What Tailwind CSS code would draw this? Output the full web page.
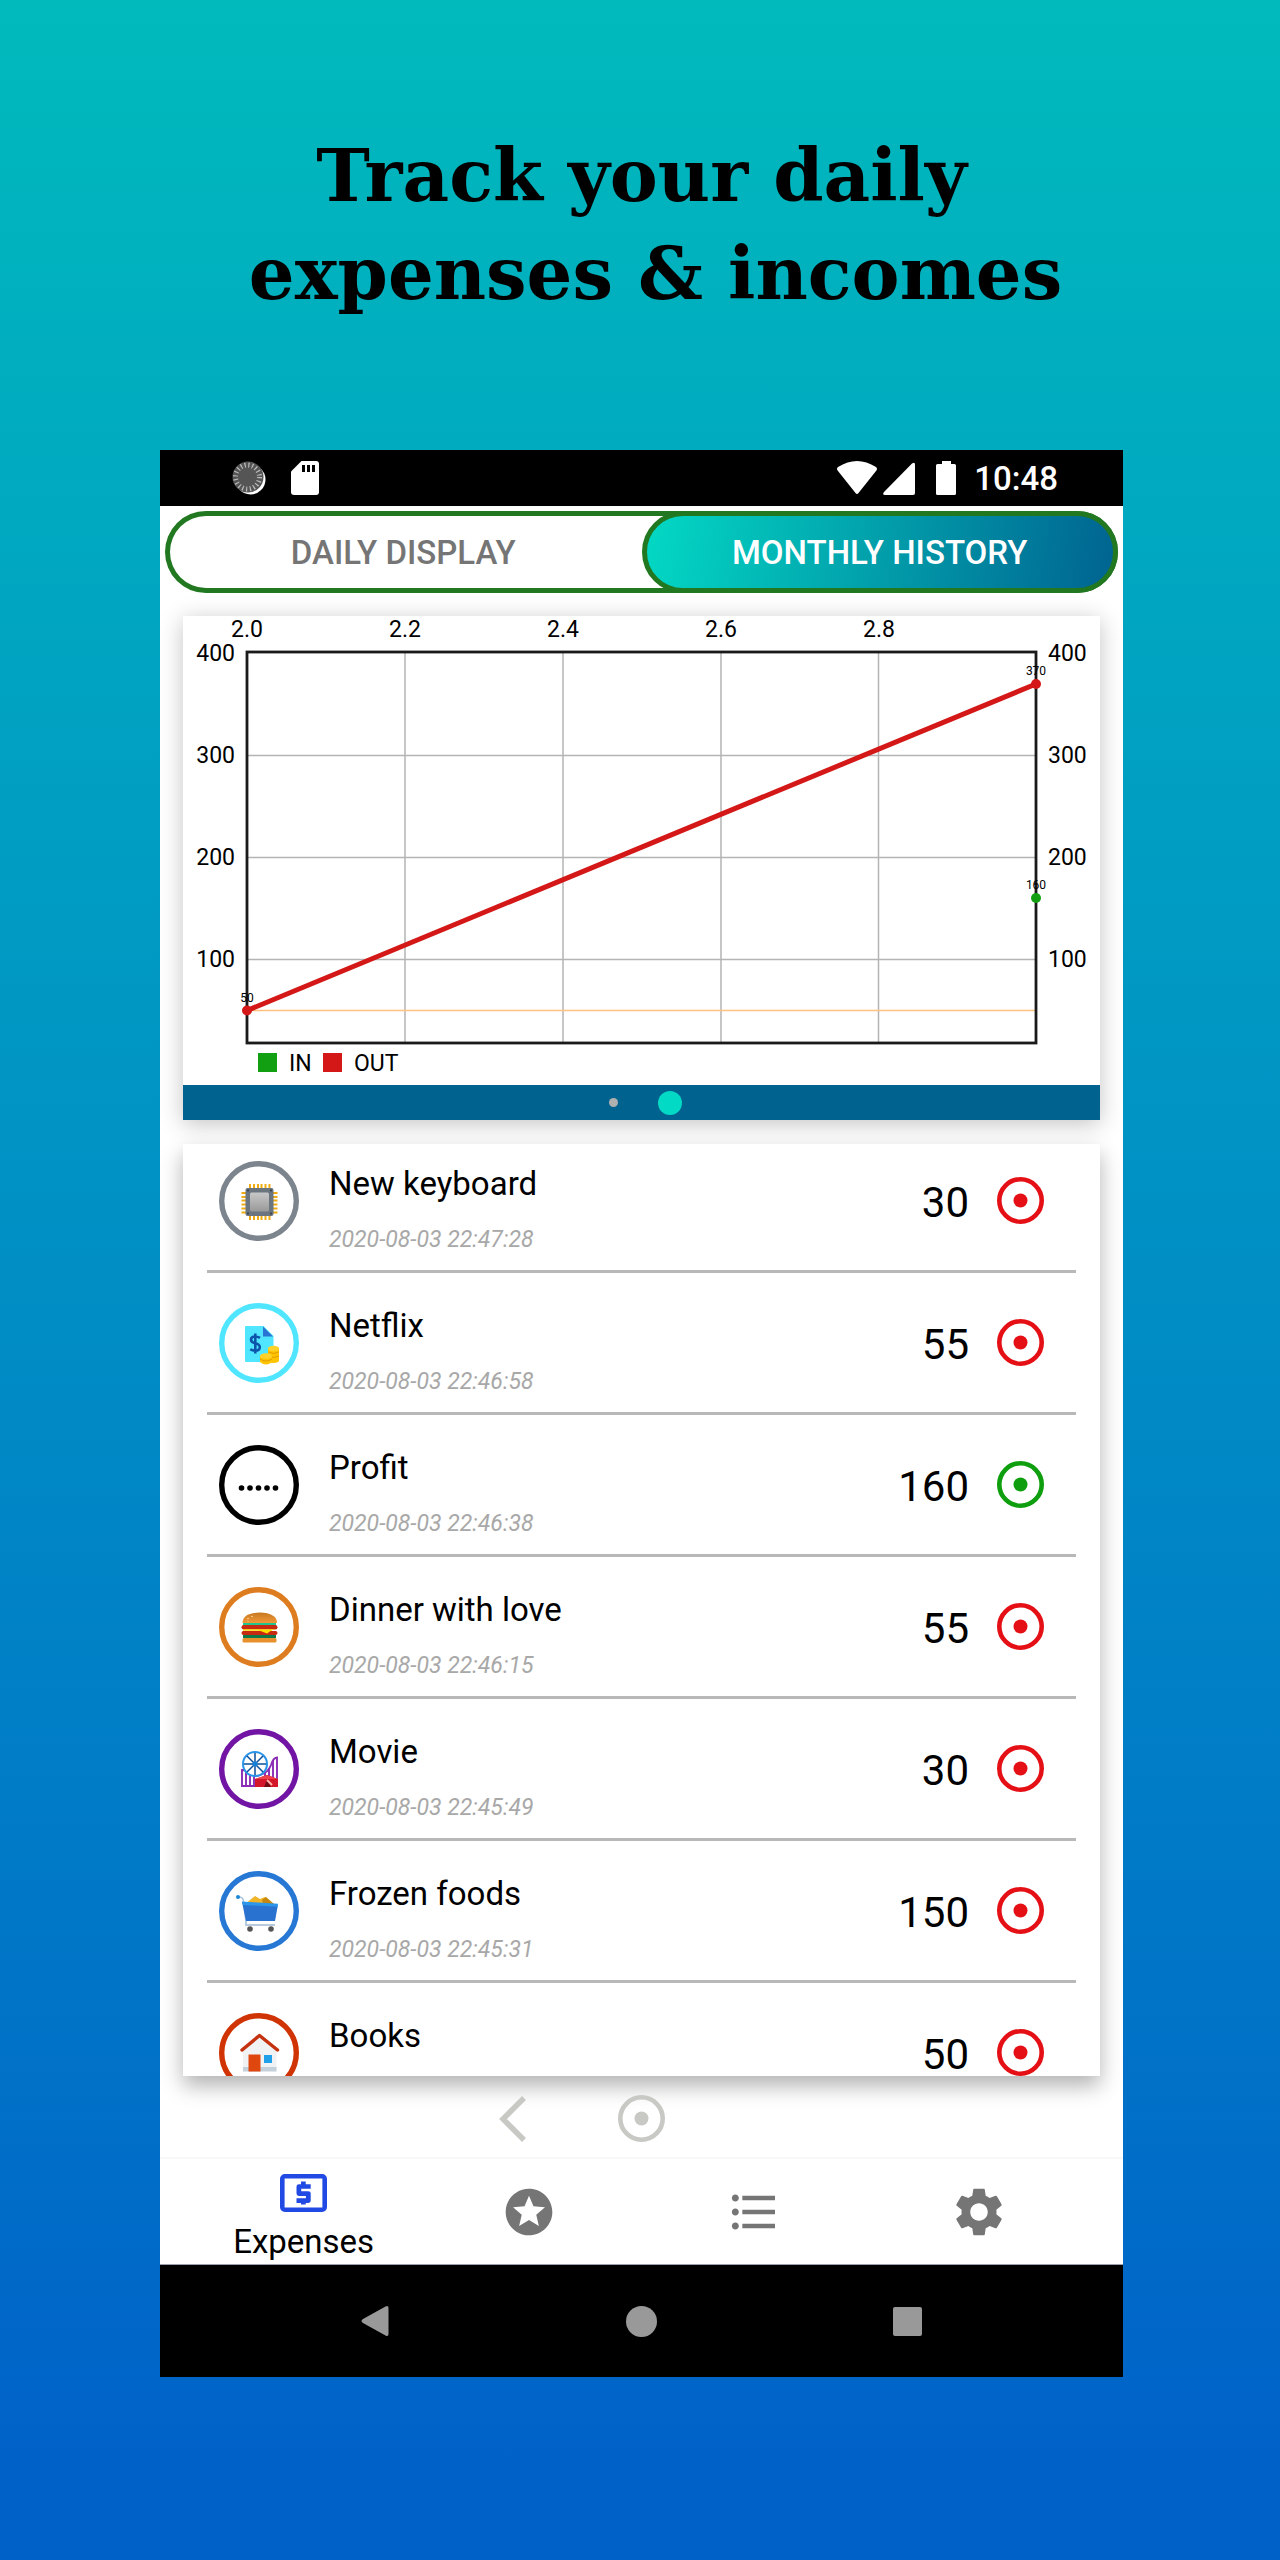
<!DOCTYPE html>
<html lang="en">
<head>
<meta charset="utf-8">
<meta name="viewport" content="width=device-width, initial-scale=1">
<title>Track your daily expenses &amp; incomes</title>
<script src="https://cdn.jsdelivr.net/npm/@tailwindcss/browser@4"></script>
</head>
<body class="min-h-screen bg-linear-to-b from-[#00babc] to-[#0061c8] to-97% pt-[127px] pr-[157px] pb-[183px] pl-40 font-[Roboto,sans-serif] text-black">
  <h1 class="flex h-[323px] flex-col items-center font-['DejaVu_Serif',serif] text-[72px] leading-[98px] font-bold whitespace-nowrap">
    <span>Track your daily</span>
    <span class="pl-7">expenses &amp; incomes</span>
  </h1>

  <main class="bg-white">
    <!-- Status bar -->
    <div class="flex h-14 items-center bg-black pr-[65px] pl-[71px] text-white">
      <svg class="h-[36px] w-[36px]" viewBox="0 0 36 36">
        <circle cx="19.500" cy="19.500" r="15" fill="#fff"/>
        <circle cx="17" cy="17" r="15.500" fill="#555"/>
        <circle cx="16.500" cy="17" r="12" fill="none" stroke="#bbb" stroke-width="5" stroke-dasharray="1.200 2.600"/>
      </svg>
      <svg class="ml-6 h-[34px] w-7" viewBox="0 0 28 34">
        <path d="M10.500 0H25a3 3 0 0 1 3 3v28a3 3 0 0 1-3 3H3a3 3 0 0 1-3-3V10.500z" fill="#fff"/>
        <path d="M11 4h3v7h-3zM16 4h3v7h-3zM21 4h3v7h-3z" fill="#000"/>
      </svg>
      <div class="ml-auto flex items-center">
        <svg class="h-[34px] w-10" viewBox="0 0 40 34"><path d="M1 6Q20-6 39 6q2 2 0 4L21.500 32q-1.500 2-3 0L1 10q-2-2 0-4z" fill="#fff"/></svg>
        <svg class="ml-1.5 h-[34px] w-8" viewBox="0 0 32 34"><path d="M29 2.500q3-2 3 1V32q0 2-2 2H2q-3 0-1-3z" fill="#fff"/></svg>
        <svg class="ml-[21px] h-[34px] w-5" viewBox="0 0 20 34"><path d="M6 0h9v3h3.500q1.500 0 1.500 1.500v28q0 1.500-1.500 1.500h-17Q0 34 0 32.500v-28Q0 3 1.500 3H6z" fill="#fff"/></svg>
        <span class="ml-[18px] pt-0.5 text-[33px] leading-10 font-medium">10:48</span>
      </div>
    </div>

    <!-- View switch -->
    <div class="px-[5px] pt-[5px]">
      <div class="grid h-[82px] grid-cols-2 rounded-full bg-white inset-ring-5 inset-ring-[#217821]">
        <button type="button" class="rounded-full pt-0.5 text-[33px] font-medium text-[#757575]">DAILY DISPLAY</button>
        <button type="button" class="rounded-full border-[5px] border-[#217821] bg-linear-[100deg] from-[#03dac5] to-[#006290] bg-origin-border pt-0.5 text-[33px] font-medium text-white">MONTHLY HISTORY</button>
      </div>
    </div>

    <!-- Monthly chart -->
    <section class="mx-[23px] mt-[23px] bg-white shadow-[0_4px_22px_rgba(0,0,0,0.24)]" aria-label="Monthly chart">
      <svg class="block w-full" viewBox="0 0 917 469" font-family="Roboto, sans-serif" font-size="23">
        <path d="M222 36V427M380 36V427M538 36V427M695.500 36V427M64 139.500H853M64 241.500H853M64 343.500H853" fill="none" stroke="#b4b4b4" stroke-width="1.500"/>
        <path d="M64 394.500H853" stroke="#ffc080" stroke-width="1.500"/>
        <rect x="64" y="36" width="789" height="391" fill="none" stroke="#1a1a1a" stroke-width="2.800"/>
        <path d="M64 394.500L853 68" stroke="#d41818" stroke-width="5"/>
        <circle cx="64" cy="394.500" r="5" fill="#d41818"/>
        <circle cx="853" cy="68" r="5" fill="#d41818"/>
        <circle cx="853" cy="282" r="5" fill="#12a012"/>
        <g text-anchor="middle">
          <text x="64" y="21">2.0</text><text x="222" y="21">2.2</text><text x="380" y="21">2.4</text><text x="538" y="21">2.6</text><text x="696" y="21">2.8</text>
        </g>
        <g text-anchor="end">
          <text x="52" y="45">400</text><text x="52" y="147">300</text><text x="52" y="249">200</text><text x="52" y="351">100</text>
        </g>
        <text x="865" y="45">400</text><text x="865" y="147">300</text><text x="865" y="249">200</text><text x="865" y="351">100</text>
        <g text-anchor="middle" font-size="12">
          <text x="64" y="386">50</text><text x="853" y="59">370</text><text x="853" y="273">160</text>
        </g>
        <rect x="75" y="437" width="19" height="19" fill="#12a012"/><text x="106" y="455">IN</text>
        <rect x="140" y="437" width="19" height="19" fill="#d41818"/><text x="171" y="455">OUT</text>
      </svg>
      <div class="flex h-[35px] items-center justify-center gap-10 bg-[#00628f] pl-2">
        <span class="size-[9px] rounded-full bg-[#b0b0b0]"></span>
        <span class="size-6 rounded-full bg-[#03dac5]"></span>
      </div>
    </section>

    <!-- Entries -->
    <section class="mx-[23px] mt-6 h-[932px] overflow-hidden bg-white shadow-[0_10px_20px_rgba(0,0,0,0.3)]" aria-label="Entries">
      <ul id="entries" class="-mt-[13px] px-6"></ul>
    </section>

    <!-- Pager -->
    <div class="grid h-[83px] grid-cols-3 border-b-2 border-[#f8f8f8] px-[286px]">
      <button type="button" aria-label="Previous" class="flex justify-center pt-5 pl-1"><svg class="h-[46px] w-7 shrink-0" viewBox="0 0 28 46"><path d="M25 2L4 23l21 21" fill="none" stroke="#c8c8c4" stroke-width="5.500"/></svg></button>
      <button type="button" aria-label="Current" class="flex justify-center pt-[19px]"><svg class="size-[47px] shrink-0" viewBox="0 0 47 47"><circle cx="23.500" cy="23.500" r="21.200" fill="none" stroke="#c8c8c4" stroke-width="4.600"/><circle cx="23.500" cy="23.500" r="7" fill="#c8c8c4"/></svg></button>
    </div>

    <!-- App navigation -->
    <nav class="grid h-[106px] grid-cols-4 border-b border-gray-400 px-[31px]">
      <a href="#expenses" class="flex flex-col items-center pt-[15px]">
        <svg class="h-[38px] w-[47px]" viewBox="0 0 47 38"><rect x="2.300" y="2.300" width="42.400" height="33.400" rx="2.500" fill="none" stroke="#2149e4" stroke-width="4.600"/><path d="M21 30.500V29h-4.500v-4.700h9.400v-2.400H19q-2.500 0-2.500-2.300v-7q0-2.400 2.500-2.400h2V7.500h4.700v2.700h5v4.600h-9.500v2.400H28q2.700 0 2.700 2.400v7q0 2.400-2.700 2.400h-2.300v1.500z" fill="#2149e4"/></svg>
        <span class="mt-2.5 text-[33px] leading-10">Expenses</span>
      </a>
      <a href="#favorites" aria-label="Favorites" class="flex items-center justify-center"><svg class="size-14" viewBox="0 0 24 24" fill="#757575"><path d="M11.990 2C6.470 2 2 6.480 2 12s4.470 10 9.990 10C17.520 22 22 17.520 22 12S17.520 2 11.990 2zm4.240 16L12 15.450 7.770 18l1.120-4.810-3.730-3.230 4.920-.42L12 5l1.920 4.530 4.920.42-3.730 3.230L16.230 18z"/></svg></a>
      <a href="#list" aria-label="List" class="flex items-center justify-center"><svg class="size-14" viewBox="0 0 24 24" fill="#757575"><path d="M4 10.500c-.83 0-1.500.67-1.500 1.500s.67 1.500 1.500 1.500 1.500-.67 1.500-1.500-.67-1.500-1.500-1.500zm0-6c-.83 0-1.500.67-1.500 1.500S3.170 7.500 4 7.500 5.500 6.830 5.500 6 4.830 4.500 4 4.500zm0 12c-.83 0-1.500.68-1.500 1.500s.68 1.500 1.500 1.500 1.500-.68 1.500-1.500-.67-1.500-1.500-1.500zM7 19h14v-2H7v2zm0-6h14v-2H7v2zm0-8v2h14V5H7z"/></svg></a>
      <a href="#settings" aria-label="Settings" class="flex items-center justify-center"><svg class="size-14" viewBox="0 0 24 24" fill="#757575"><path d="M19.430 12.980c.04-.32.07-.64.07-.98s-.03-.66-.07-.98l2.110-1.650c.19-.15.24-.42.12-.64l-2-3.460c-.12-.22-.39-.3-.61-.22l-2.490 1c-.52-.4-1.080-.73-1.690-.98l-.38-2.650C14.460 2.180 14.250 2 14 2h-4c-.25 0-.46.18-.49.42l-.38 2.650c-.61.25-1.170.59-1.690.98l-2.490-1c-.23-.09-.49 0-.61.22l-2 3.460c-.13.22-.07.49.12.64l2.110 1.650c-.04.32-.07.65-.07.98s.03.66.07.98l-2.110 1.650c-.19.15-.24.42-.12.64l2 3.460c.12.22.39.3.61.22l2.490-1c.52.4 1.080.73 1.690.98l.38 2.650c.03.24.24.42.49.42h4c.25 0 .46-.18.49-.42l.38-2.650c.61-.25 1.170-.59 1.690-.98l2.490 1c.23.09.49 0 .61-.22l2-3.460c.12-.22.07-.49-.12-.64l-2.110-1.650zM12 15.750c-2.070 0-3.750-1.680-3.750-3.750s1.680-3.750 3.750-3.750 3.750 1.680 3.750 3.750-1.680 3.750-3.750 3.750z"/></svg></a>
    </nav>

    <!-- System navigation -->
    <div class="grid h-28 grid-cols-3 bg-black px-[82px]">
      <button type="button" aria-label="Back" class="flex items-center justify-center"><svg class="h-8 w-7" viewBox="0 0 28 32"><path d="M24.500 1.500q3-1.500 3 1.500v26q0 3-3 1.500L2 18q-3-2 0-4z" fill="#999"/></svg></button>
      <button type="button" aria-label="Home" class="flex items-center justify-center"><span class="size-[31px] rounded-full bg-[#999]"></span></button>
      <button type="button" aria-label="Recent apps" class="flex items-center justify-center"><span class="size-[29px] rounded-[2px] bg-[#999]"></span></button>
    </div>
  </main>

  <script>
    const icons = {
      chip: `<g stroke="#f0ac10" stroke-width="2"><path d="M31 23v36M35 23v36M39 23v36M42.500 23v36M46.500 23v36M50.500 23v36M22.500 32h36M22.500 36h36M22.500 39.500h36M22.500 43.500h36M22.500 47.500h36M22.500 51.500h36"/></g><rect x="26.500" y="27" width="28" height="28" rx="2" fill="#6b7580"/><rect x="31" y="31.500" width="19" height="19" rx="1.500" fill="url(#metal)"/><g fill="#333b44"><circle cx="29" cy="29.500" r="1"/><circle cx="52" cy="29.500" r="1"/><circle cx="29" cy="52.500" r="1"/><circle cx="52" cy="52.500" r="1"/></g>`,
      bill: `<path d="M27 23h17.500l10 10v26H27q-1 0-1-1V24q0-1 1-1z" fill="#50e6ff"/><path d="M44 23.500l10 10H44z" fill="#2a74d4"/><path d="M41 34.800q-2-1.300-5-1.300-4 0-4 3.200 0 2.600 4.300 3.500 4.500 1 4.500 4 0 3.400-4.600 3.400-3 0-5-1.400M36.300 30.500v20" fill="none" stroke="#0d55ab" stroke-width="2.600"/><rect x="49" y="45" width="11" height="13" fill="#ffc400"/><ellipse cx="54.500" cy="57.500" rx="5.500" ry="2.500" fill="#ffc400"/><ellipse cx="54.500" cy="45.500" rx="5.500" ry="2.700" fill="#ffd22a"/><path d="M49.500 49q5 3 10.500 0M49.500 53q5 3 10.500 0" fill="none" stroke="#e09c00"/><path d="M41 53h12v6q-6 5-12 0z" fill="#ffc400"/><ellipse cx="47" cy="53" rx="6" ry="2.800" fill="#ffd22a"/><path d="M41 56q6 4 12 0" fill="none" stroke="#e09c00"/>`,
      dots: `<g fill="#000"><circle cx="22.500" cy="43" r="2.800"/><circle cx="31" cy="43" r="2.800"/><circle cx="39.500" cy="43" r="2.800"/><circle cx="48" cy="43" r="2.800"/><circle cx="56.500" cy="43" r="2.800"/></g>`,
      burger: `<path d="M23.500 36q0-10 17-10.500Q58 26 58 36z" fill="url(#bun)"/><path d="M24 36h33v2.500q-4 2-8 0-4 2-8 0-4 2-8 0-4 2-9 0z" fill="#1fc48e"/><rect x="22.500" y="38" width="36" height="4.500" rx="2.200" fill="#c62a10"/><path d="M24 42.300h33l-4 1-3 3-10-2.500H24z" fill="#ffd800"/><rect x="22.500" y="44" width="36" height="4" rx="2" fill="#c62a10"/><path d="M39 43h14l-5 3.500z" fill="#ffe000"/><rect x="24" y="48" width="33" height="3" fill="#0b7a48"/><rect x="23.500" y="51" width="34" height="4.500" rx="1.500" fill="#e8902c"/><g fill="#ffd9a0"><circle cx="29" cy="31.500" r=".8"/><circle cx="33" cy="29.500" r=".8"/><circle cx="29" cy="34" r=".6"/></g>`,
      park: `<g fill="none" stroke="#8a2cb4" stroke-width="1.900"><path d="M23 57V41q6 0 9 3 4 4 9 2 8-2 11-10 2-7 6-7.500V57z"/><path d="M27 42v15M31 44v13M35 46v11M46 44v8M50 39v10M54 32v17"/></g><circle cx="36" cy="35" r="12" fill="#fff" stroke="#2a94e8" stroke-width="2"/><path d="M36 24v22M25 35h22M28 27l16 16M44 27L28 43" stroke="#0b4f9a" stroke-width="1.500"/><circle cx="36" cy="35" r="2.500" fill="#1080d8"/><path d="M36 50l12-4 11 4v8H36z" fill="#d4162a"/><path d="M36 50l12-4 11 4z" fill="#f0404c"/><path d="M48 51l-3 7h7z" fill="#700c14"/><path d="M48 51l5 5" stroke="#ffb0a8" stroke-width="2"/>`,
      cart: `<path d="M26 33l10-8 5 3 5-2 9 7z" fill="#f0b429"/><path d="M43 29l4-3 8 7H44z" fill="#c48810"/><path d="M20 26q4 0 4.500 4L27 51" fill="none" stroke="#aac4dc" stroke-width="1.600"/><circle cx="19" cy="26" r="2" fill="#1a86d8"/><path d="M23 31l36 2.500-3 16.500H27z" fill="#2a72d0"/><path d="M23 30.500l36 2.300-.5 3L24 34z" fill="#2b96ea"/><path d="M27 51v3h29" fill="none" stroke="#b8cbdc" stroke-width="2"/><circle cx="31" cy="58" r="2.800" fill="#555"/><circle cx="52" cy="58" r="2.800" fill="#555"/>`,
      house: `<path d="M24 38l16.500-14L57.500 38v18H24z" fill="#f1f2f4"/><path d="M24 54h33.500v4.500H24z" fill="#c4d0da"/><rect x="29.500" y="41.500" width="12" height="17" fill="#df470e"/><rect x="45" y="42" width="8" height="8" fill="#20a0e8"/><path d="M23 37l17.500-14.500L58.500 37" fill="none" stroke="#c43210" stroke-width="3.500" stroke-linecap="round" stroke-linejoin="round"/>`
    };
    const entries = [
      ["New keyboard", "2020-08-03 22:47:28", 30, "out", "#7c848e", "chip"],
      ["Netflix", "2020-08-03 22:46:58", 55, "out", "#50e6ff", "bill"],
      ["Profit", "2020-08-03 22:46:38", 160, "in", "#000000", "dots"],
      ["Dinner with love", "2020-08-03 22:46:15", 55, "out", "#de7c20", "burger"],
      ["Movie", "2020-08-03 22:45:49", 30, "out", "#7214a4", "park"],
      ["Frozen foods", "2020-08-03 22:45:31", 150, "out", "#2678d4", "cart"],
      ["Books", "", 50, "out", "#d03404", "house"]
    ];
    document.getElementById("entries").innerHTML = entries.map(([name, date, amount, kind, ring, icon]) => {
      const c = kind === "in" ? "#0e9e0e" : "#e51015";
      return `<li class="flex h-[142px] items-center border-b-3 border-[#b8b8b8] pr-8 pl-3">
        <svg class="size-20 shrink-0" viewBox="0 0 80 80"><defs><linearGradient id="metal" x2="0" y2="1"><stop stop-color="#c8c8c8"/><stop offset="1" stop-color="#999"/></linearGradient><linearGradient id="bun" x2="0" y2="1"><stop stop-color="#c87820"/><stop offset="1" stop-color="#f09838"/></linearGradient></defs><circle cx="40" cy="40" r="37.300" fill="none" stroke="${ring}" stroke-width="5.400"/>${icons[icon]}</svg>
        <div class="ml-[30px] flex flex-col gap-5 pt-[18px]">
          <span class="text-[33px] leading-10">${name}</span>
          <time class="min-h-8 text-[23px] leading-8 text-[#a8a8a8] italic">${date}</time>
        </div>
        <span class="ml-auto pt-1 text-[42px] leading-12">${amount}</span>
        <svg class="ml-7 size-[47px] shrink-0" viewBox="0 0 47 47"><circle cx="23.500" cy="23.500" r="21.200" fill="none" stroke="${c}" stroke-width="4.600"/><circle cx="23.500" cy="23.500" r="7" fill="${c}"/></svg>
      </li>`;
    }).join("");
  </script>
</body>
</html>
